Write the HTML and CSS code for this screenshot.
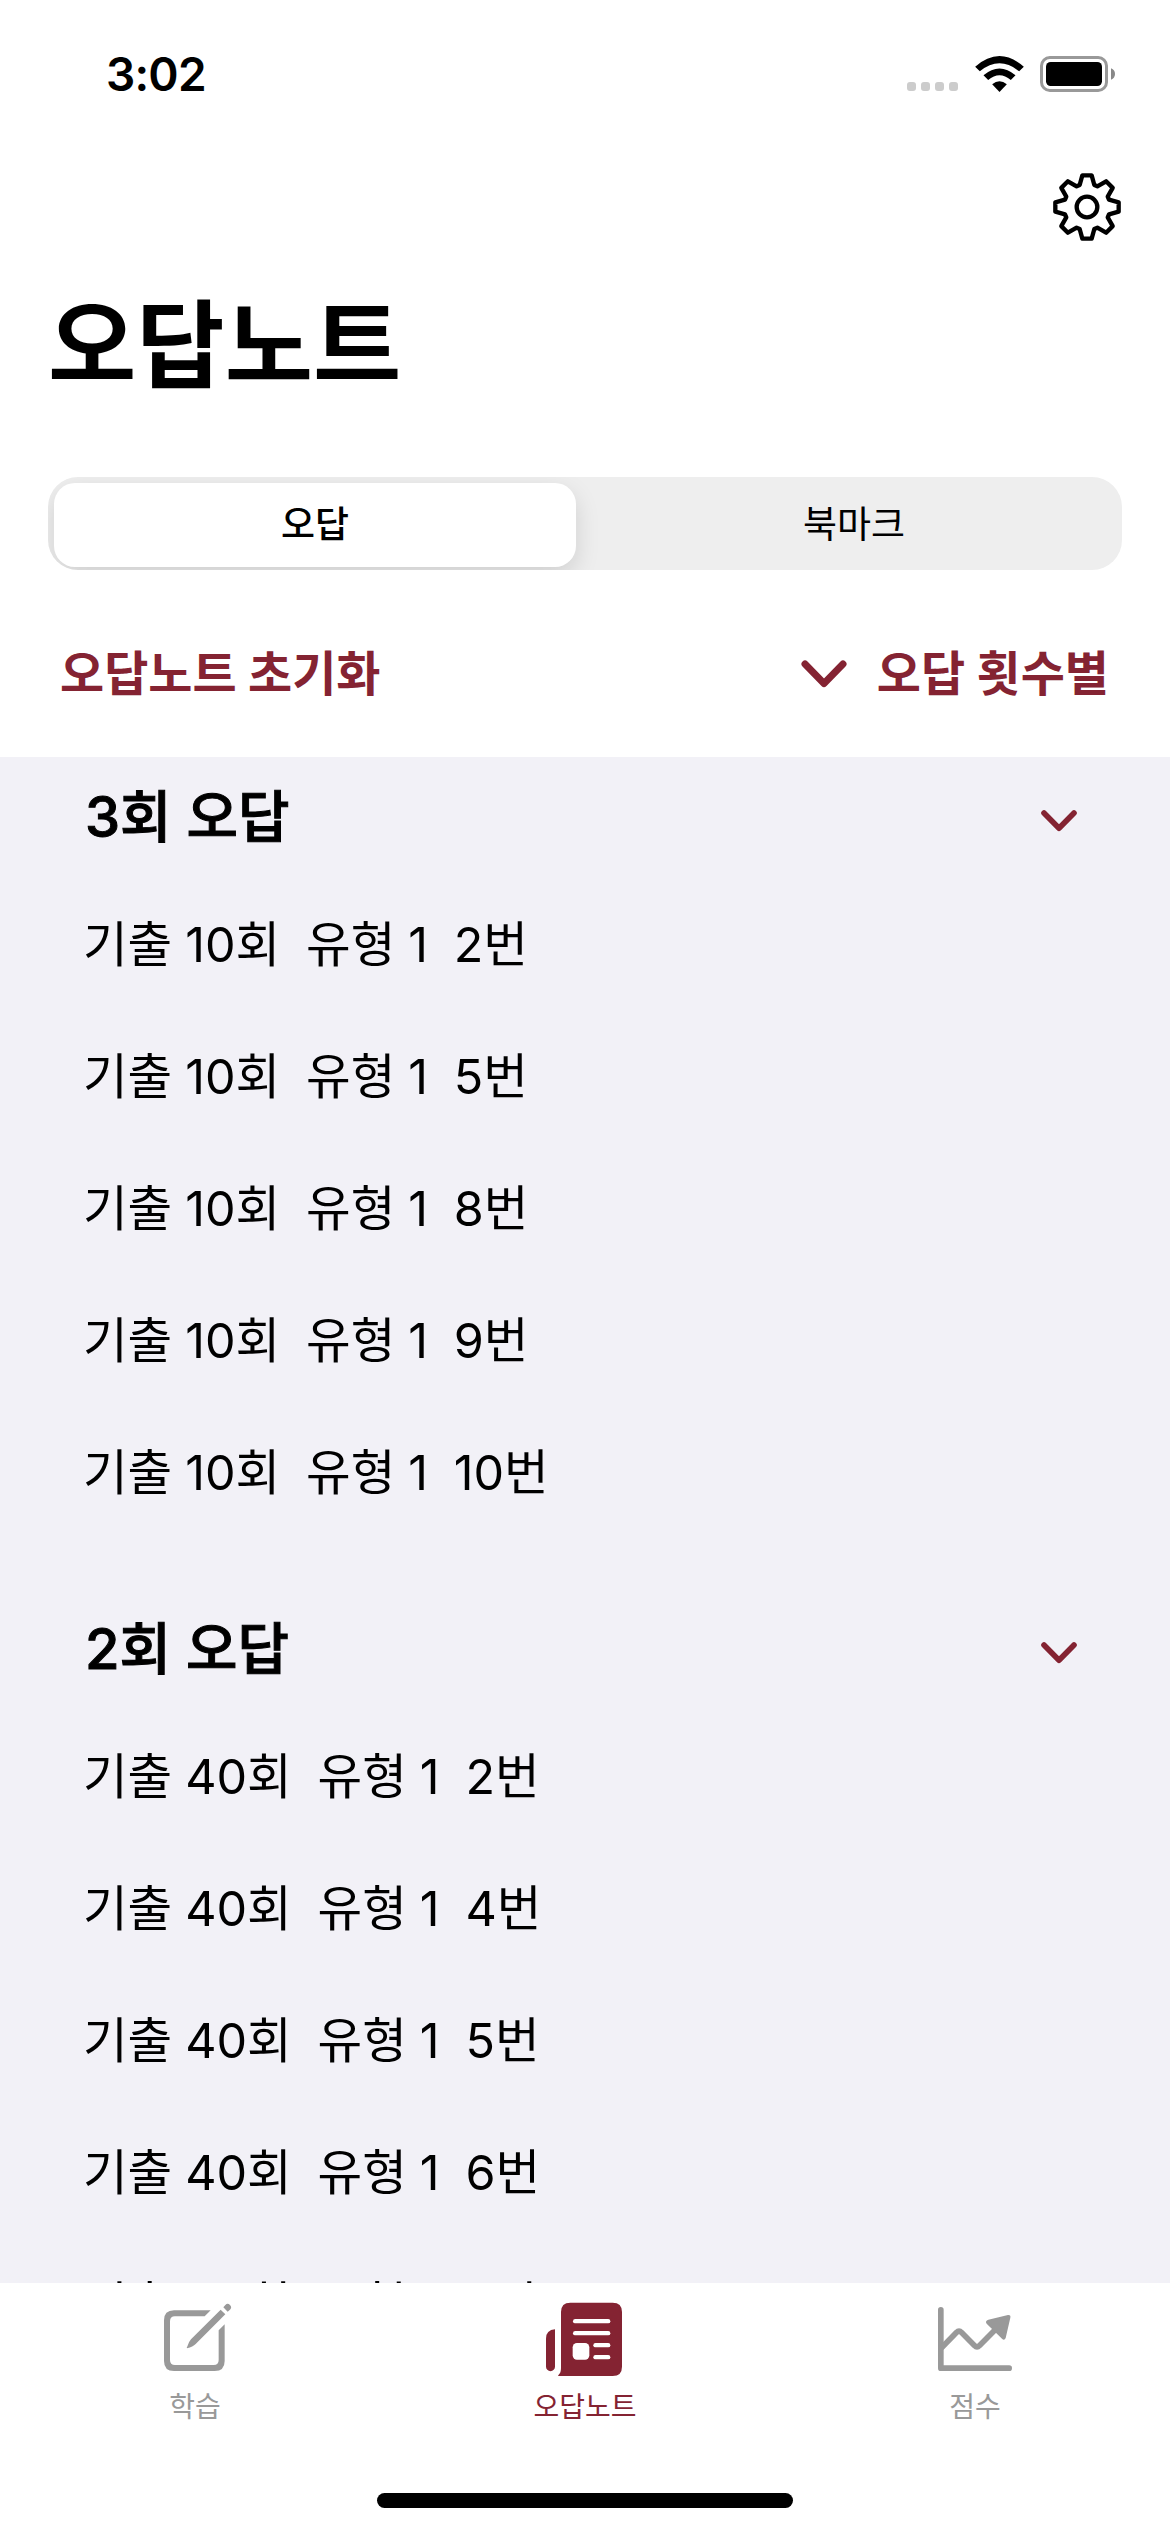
FILE: index.html
```
<!DOCTYPE html>
<html lang="ko">
<head>
<meta charset="utf-8">
<title>오답노트</title>
<link rel="stylesheet" href="styles.css">
</head>
<body>
<div class="screen">
  <header class="status-bar">
    <span class="time">3:02</span>
    <div class="status-icons">
      <span class="signal"><i></i><i></i><i></i><i></i></span>
      <svg class="wifi" viewBox="0 0 146 108">
        <path d="M0 32Q73 -32 146 32L132 46Q73 -2 14 46Z"/>
        <path d="M25 58Q73 17 121 58L107 72Q73 44 39 72Z"/>
        <path d="M51 85Q73 66 95 85L73 108Z"/>
      </svg>
      <svg class="battery" viewBox="0 0 225 108">
        <rect x="4.5" y="4.5" width="195" height="99" rx="25" fill="none" stroke="#999" stroke-width="9"/>
        <rect x="18" y="18" width="168" height="72" rx="14"/>
        <path d="M213 37Q225 42 225 54T213 71Z" fill="#888"/>
      </svg>
    </div>
  </header>

  <div class="toolbar">
    <svg class="gear" viewBox="-102 -102 204 204">
      <path d="M-22-66L-14-95H14L22-66L31.1-62.2L57.3-77.1L77.1-57.3L62.2-31.1L66-22L95-14V14L66 22L62.2 31.1L77.1 57.3L57.3 77.1L31.1 62.2L22 66L14 95H-14L-22 66L-31.1 62.2L-57.3 77.1L-77.1 57.3L-62.2 31.1L-66 22L-95 14V-14L-66-22L-62.2-31.1L-77.1-57.3L-57.3-77.1L-31.1-62.2Z"/>
      <circle r="31"/>
    </svg>
  </div>

  <h1 class="title">오답노트</h1>

  <div class="segmented">
    <button class="segment selected">오답</button>
    <button class="segment">북마크</button>
  </div>

  <div class="actions">
    <span class="reset">오답노트 초기화</span>
    <span class="sort">
      <svg class="chevron-large" viewBox="0 0 46 28"><path d="M4 4L23 23.5L42 4"/></svg>
      <span>오답 횟수별</span>
    </span>
  </div>

  <main class="list">
    <section class="group">
      <div class="group-header">
        <h2>3회 오답</h2>
        <svg class="chevron" viewBox="0 0 36 22"><path d="M3 3L18 18.3L33 3"/></svg>
      </div>
      <p class="row">기출 10회  유형 1  2번</p>
      <p class="row">기출 10회  유형 1  5번</p>
      <p class="row">기출 10회  유형 1  8번</p>
      <p class="row">기출 10회  유형 1  9번</p>
      <p class="row">기출 10회  유형 1  10번</p>
    </section>
    <section class="group">
      <div class="group-header">
        <h2>2회 오답</h2>
        <svg class="chevron" viewBox="0 0 36 22"><path d="M3 3L18 18.3L33 3"/></svg>
      </div>
      <p class="row">기출 40회  유형 1  2번</p>
      <p class="row">기출 40회  유형 1  4번</p>
      <p class="row">기출 40회  유형 1  5번</p>
      <p class="row">기출 40회  유형 1  6번</p>
      <p class="row">기출 40회  유형 1  7번</p>
    </section>
  </main>

  <nav class="tab-bar">
    <div class="tabs">
      <div class="tab">
        <svg class="tab-icon" viewBox="75 60 240 258">
          <path d="M242 121H132Q102 121 102 151V273Q102 303 132 303H254Q284 303 284 273V163L266 181V270Q266 285 251 285H135Q120 285 120 270V154Q120 139 135 139H224Z"/>
          <path d="M272 119L286 133L197 222Q189 230 171 235Q169 234 171 232Q176 215 183 208Z"/>
          <path d="M280 112L286 105Q293 98 300 105Q307 112 300 119L293 125Z"/>
        </svg>
        <span>학습</span>
      </div>
      <div class="tab active">
        <svg class="tab-icon" viewBox="75 60 240 258">
          <path d="M151 98H278Q306 98 306 126V290Q306 318 278 318H116Q112 318 116 314Q123 309 123 294V126Q123 98 151 98Z"/>
          <path d="M105 178Q78 180 78 206V290A13.5 13.5 0 0 0 105 290Z"/>
          <g fill="#fff">
            <rect x="159" y="147" width="112" height="13" rx="6.5"/>
            <rect x="159" y="183" width="112" height="13" rx="6.5"/>
            <rect x="158" y="219" width="50" height="50" rx="13"/>
            <rect x="220" y="219" width="51" height="13" rx="6.5"/>
            <rect x="220" y="255" width="51" height="13" rx="6.5"/>
          </g>
        </svg>
        <span>오답노트</span>
      </div>
      <div class="tab">
        <svg class="tab-icon" viewBox="105 60 240 258">
          <g fill="none" stroke="currentColor" stroke-width="17" stroke-linecap="round" stroke-linejoin="round">
            <path d="M122.5 119.500V294.500H327.500"/>
            <path d="M124 234L170 187Q177 179 184 187L224 227Q231 235 238 227L290 175" stroke-linecap="butt"/>
          </g>
          <path d="M265 149L324 135Q333 134 331 143L317 204Q313 213 306 206L260 161Q254 153 265 149Z"/>
        </svg>
        <span>점수</span>
      </div>
    </div>
    <div class="home-indicator"></div>
  </nav>
</div>
</body>
</html>
```

FILE: styles.css
```
* { box-sizing: border-box; }

body {
  margin: 0;
  background: #fff;
  color: #000;
  font-family: Inter, "Noto Sans CJK KR", sans-serif;
}

h1, h2, p { margin: 0; }
svg { display: block; flex: none; }

.screen {
  width: 1170px;
  height: 2532px;
  display: flex;
  flex-direction: column;
  overflow: hidden;
}

.status-bar {
  height: 148px;
  padding: 0 55px 0 106px;
  display: flex;
  align-items: center;
  justify-content: space-between;
}
.time { font-size: 46px; font-weight: 600; line-height: 56px; letter-spacing: -0.8px; }
.status-icons { display: flex; align-items: center; }
.signal { display: flex; gap: 5px; margin: 25px 17px 0 0; }
.signal i { width: 9px; height: 9px; border-radius: 3px; background: #ccc; }
.wifi { width: 49px; height: 36px; margin-right: 16px; }
.battery { width: 75px; height: 36px; }

.toolbar {
  height: 118px;
  padding: 25px 49px 0 0;
  display: flex;
  justify-content: flex-end;
}
.gear { width: 68px; height: 68px; fill: none; stroke: #000; stroke-width: 13; stroke-linejoin: round; }

.title {
  height: 211px;
  padding: 19px 0 0 48px;
  font-size: 96px;
  line-height: 120px;
  font-weight: 700;
  white-space: nowrap;
}

.segmented {
  height: 93px;
  margin: 0 48px;
  padding: 6px 6px 3px;
  display: flex;
  border-radius: 30px;
  background: #eee;
  overflow: hidden;
}
.segment {
  flex: 1 1 0;
  padding: 0 0 0 16px;
  border: 0;
  border-radius: 21px;
  background: none;
  font: 400 37px/84px Inter, "Noto Sans CJK KR", sans-serif;
  color: #000;
}
.segment.selected {
  flex: 0 0 522px;
  padding: 0;
  background: #fff;
  font-weight: 500;
  box-shadow: 0 9px 24px rgba(0, 0, 0, 0.13);
}

.actions {
  height: 187px;
  padding: 0 61px 0 60px;
  display: flex;
  align-items: center;
  justify-content: space-between;
  color: #842332;
  font-size: 48px;
  line-height: 60px;
  font-weight: 700;
}
.reset, .sort { margin-top: 20px; }
.sort { display: flex; align-items: center; gap: 30px; }
.chevron-large, .chevron { fill: none; stroke: #842332; stroke-linecap: round; stroke-linejoin: round; }
.chevron-large { width: 46px; height: 28px; stroke-width: 7; }

.list {
  height: 1526px;
  flex: none;
  overflow: hidden;
  background: #f2f1f7;
}
.group { padding: 0 93px 52px 83px; }
.group-header {
  height: 120px;
  padding-left: 2px;
  display: flex;
  align-items: center;
  justify-content: space-between;
}
h2 {
  font-size: 56px;
  line-height: 80px;
  font-weight: 500;
  -webkit-text-stroke: 1px #000;
}
.chevron { width: 36px; height: 22px; margin-top: 7px; stroke-width: 5.6; }
.row {
  height: 132px;
  padding-top: 2px;
  font-size: 48.5px;
  line-height: 132px;
  word-spacing: -0.7px;
  white-space: pre;
}

.tab-bar {
  flex: 1;
  display: flex;
  flex-direction: column;
  align-items: center;
  background: #fff;
}
.tabs { width: 100%; height: 210px; display: flex; }
.tab {
  flex: 1;
  padding-top: 7px;
  display: flex;
  flex-direction: column;
  align-items: center;
  gap: 11px;
  color: #999;
  font-size: 28px;
  line-height: 40px;
}
.tab.active { color: #842332; }
.tab-icon { width: 80px; height: 86px; fill: currentColor; }
.home-indicator { width: 416px; height: 15px; border-radius: 8px; background: #000; }
```
